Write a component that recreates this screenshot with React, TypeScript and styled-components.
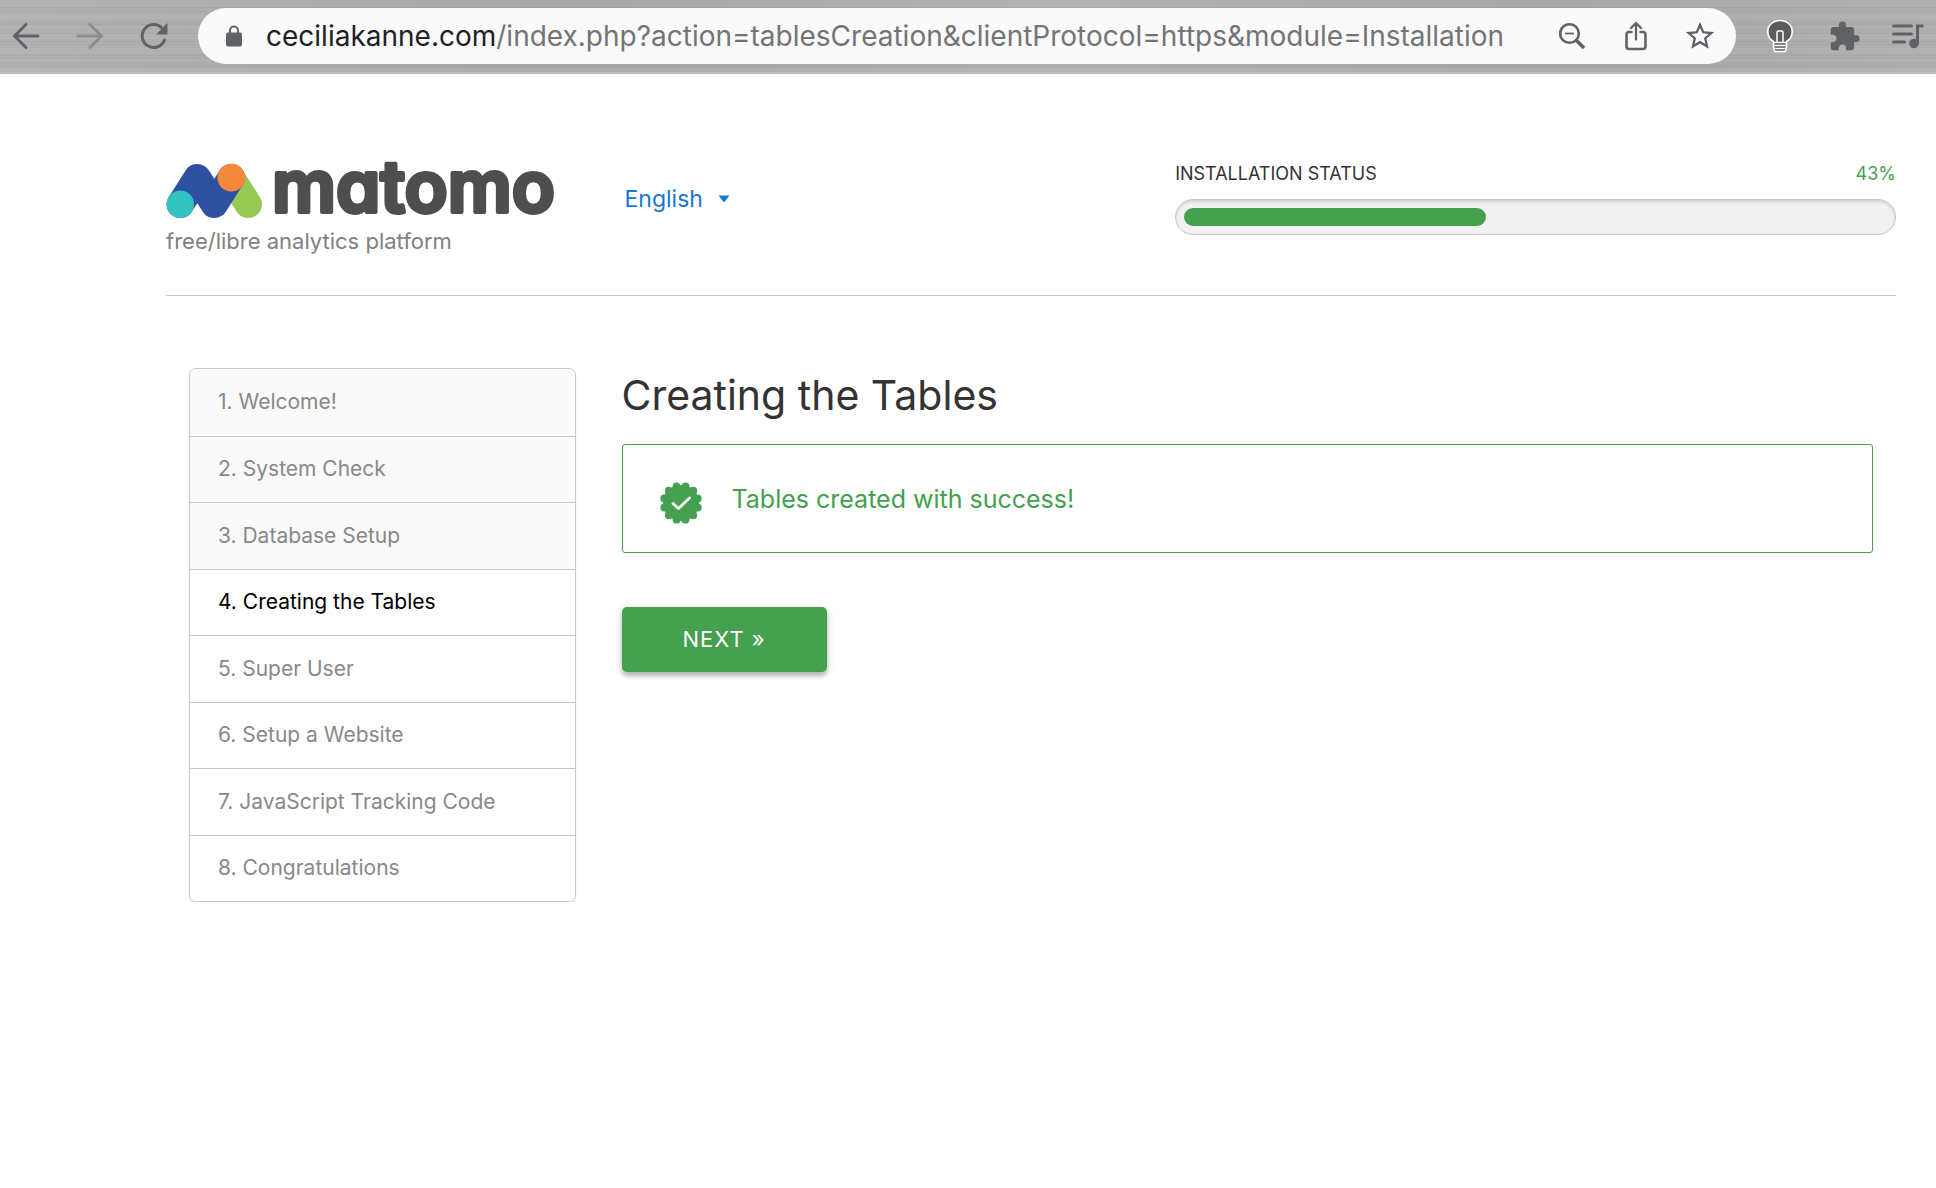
import React from "react";
import styled, { createGlobalStyle } from "styled-components";
import { MdExtension, MdStarBorder } from "react-icons/md";

const color = {
  green: "#45a050",
  blue: "#1976d2",
  line: "#c8c8c8",
  text: "#333333",
  muted: "#888888",
  icon: "#5f6368",
};

const GlobalStyle = createGlobalStyle`
  *, *::before, *::after { box-sizing: border-box; }
  body {
    margin: 0;
    background: #ffffff;
    color: ${color.text};
    font-family: Inter, "Liberation Sans", sans-serif;
  }
  button, select { font-family: inherit; }
`;

/* ---------- browser toolbar ---------- */

const Toolbar = styled.div`
  display: flex;
  align-items: center;
  gap: 18px;
  padding: 8px 2px 8px 0;
  border-bottom: 2px solid #bebebe;
  background:
    linear-gradient(90deg, rgba(255, 255, 255, 0.06), rgba(0, 0, 0, 0.03) 30%, rgba(255, 255, 255, 0.05) 55%, rgba(0, 0, 0, 0.03) 80%, rgba(255, 255, 255, 0.04)),
    repeating-linear-gradient(180deg, rgba(0, 0, 0, 0.03) 0 1px, transparent 1px 4px, rgba(255, 255, 255, 0.06) 4px 6px, transparent 6px 11px),
    repeating-linear-gradient(180deg, rgba(255, 255, 255, 0.05) 0 2px, transparent 2px 7px, rgba(0, 0, 0, 0.04) 7px 8px, transparent 8px 17px),
    #acacac;
`;

const ToolGroup = styled.div`
  display: flex;
  gap: 12px;
`;

const ToolButton = styled.button`
  display: flex;
  align-items: center;
  justify-content: center;
  width: 52px;
  height: 52px;
  padding: 0;
  border: 0;
  border-radius: 50%;
  background: transparent;
  color: ${color.icon};
  cursor: pointer;

  &:disabled {
    opacity: 0.45;
    cursor: default;
  }
`;

const AddressBar = styled.div`
  display: flex;
  flex: 1;
  align-items: center;
  min-width: 0;
  height: 56px;
  padding: 0 10px 0 28px;
  border-radius: 28px;
  background: #fafafa;
  color: ${color.icon};
`;

const Address = styled.div`
  flex: 1;
  min-width: 0;
  margin-left: 24px;
  overflow: hidden;
  font-size: 28px;
  line-height: 36px;
  white-space: nowrap;
  color: #737475;
`;

const Host = styled.span`
  color: #202124;
`;

/* ---------- page ---------- */

const Page = styled.div`
  padding: 84px 40px 0 166px;
`;

const Header = styled.header`
  display: grid;
  grid-template-columns: 3fr 4fr 5fr;
  align-items: start;
  padding: 0 0 39px;
  border-bottom: 1px solid ${color.line};
`;

const Brand = styled.div`
  padding-top: 6px;
`;

const Logo = styled.svg`
  display: block;
  overflow: visible;
`;

const Wordmark = styled.text`
  fill: #4e4e4e;
  stroke: #4e4e4e;
  stroke-width: 4px;
  stroke-linejoin: round;
  font-family: Inter, "Liberation Sans", sans-serif;
  font-size: 71px;
  font-weight: 600;
  font-feature-settings: "cv11";
`;

const Tagline = styled.p`
  margin: 6px 0 0;
  font-size: 22px;
  line-height: 30px;
  color: #808080;
`;

const Language = styled.label`
  display: flex;
  align-items: center;
  gap: 14px;
  padding: 26px 0 0 26px;
  color: ${color.blue};
`;

const LanguageSelect = styled.select`
  appearance: none;
  padding: 0;
  border: 0;
  background: transparent;
  font-size: 23px;
  line-height: 30px;
  color: inherit;
  cursor: pointer;
`;

const StatusLine = styled.div`
  display: flex;
  justify-content: space-between;
  margin-bottom: 9px;
  font-size: 18px;
  line-height: 32px;
`;

const Percent = styled.span`
  color: ${color.green};
`;

const Track = styled.div`
  height: 36px;
  padding: 8px;
  border: 1px solid ${color.line};
  border-radius: 18px;
  background: #f1f1f1;
  box-shadow: inset 0 2px 3px rgba(0, 0, 0, 0.12);
`;

const Fill = styled.div`
  height: 18px;
  border-radius: 9px;
  background: ${color.green};
`;

const Body = styled.div`
  display: grid;
  grid-template-columns: repeat(12, 1fr);
  column-gap: 46px;
  align-items: start;
  padding: 72px 23px 0;
`;

const Steps = styled.ol`
  display: grid;
  grid-column: span 3;
  grid-auto-rows: 1fr;
  min-height: 534px;
  margin: 0;
  padding: 0;
  overflow: hidden;
  list-style: none;
  border: 1px solid ${color.line};
  border-radius: 7px;
  box-shadow: 0 2px 2px rgba(0, 0, 0, 0.1);
`;

type StepState = "done" | "current" | "future";

const Step = styled.li<{ $state: StepState }>`
  display: flex;
  align-items: center;
  padding: 0 28px;
  font-size: 21px;
  line-height: 30px;
  background: ${(p) => (p.$state === "done" ? "#fafafa" : "#ffffff")};
  color: ${(p) => (p.$state === "current" ? "#000000" : color.muted)};

  & + & {
    border-top: 1px solid ${color.line};
  }
`;

const Content = styled.main`
  grid-column: span 9;
`;

const Title = styled.h2`
  margin: 0 0 22px;
  font-size: 41px;
  font-weight: 400;
  line-height: 54px;
`;

const Notice = styled.div`
  display: flex;
  align-items: center;
  gap: 30px;
  height: 109px;
  padding: 0 37px;
  border: 1px solid ${color.green};
  border-radius: 3px;
  font-size: 25px;
  line-height: 36px;
  color: ${color.green};
`;

const NoticeIcon = styled.span`
  display: flex;
  padding-top: 8px;
`;

const NextButton = styled.button`
  margin-top: 54px;
  padding: 0 61px;
  border: 0;
  border-radius: 5px;
  background: ${color.green};
  box-shadow: 0 4px 4px rgba(0, 0, 0, 0.2), 0 2px 8px rgba(0, 0, 0, 0.16);
  font-size: 22px;
  line-height: 65px;
  letter-spacing: 1px;
  color: #ffffff;
  cursor: pointer;
`;

/* ---------- drawings ---------- */

const stroke = {
  fill: "none",
  stroke: "currentColor",
  strokeWidth: 3,
  strokeLinecap: "round" as const,
  strokeLinejoin: "round" as const,
};

const BackIcon = () => (
  <svg width="28" height="28" viewBox="0 0 28 28" {...stroke}>
    <path d="M26 14H3M14 2.5L2.500 14L14 25.500" />
  </svg>
);

const ForwardIcon = () => (
  <svg width="28" height="28" viewBox="0 0 28 28" {...stroke}>
    <path d="M2 14H25M14 2.500L25.500 14L14 25.500" />
  </svg>
);

const ReloadIcon = () => (
  <svg width="30" height="30" viewBox="0 0 30 30">
    <path d="M25.500 19A11.500 11.500 0 1 1 23 7" {...stroke} />
    <path d="M28.500 2V13.500H17Z" fill="currentColor" />
  </svg>
);

const LockIcon = () => (
  <svg width="16" height="22" viewBox="0 0 16 22">
    <path d="M4 9V5.500a4 4 0 0 1 8 0V9" fill="none" stroke="currentColor" strokeWidth="2" />
    <rect y="7.500" width="16" height="14" rx="2" fill="currentColor" />
  </svg>
);

const ZoomOutIcon = () => (
  <svg width="28" height="28" viewBox="0 0 28 28" {...stroke} strokeLinecap="butt">
    <circle cx="11.500" cy="11.500" r="9.300" strokeWidth="2.600" />
    <path d="M7 11.500H16" strokeWidth="1.800" />
    <path d="M18 18L26 26" strokeWidth="3.600" />
  </svg>
);

const ShareIcon = () => (
  <svg width="28" height="30" viewBox="0 0 28 30" {...stroke} strokeWidth={2.6}>
    <path d="M9.500 11H7A2.500 2.500 0 0 0 4.500 13.500V25.500A2.500 2.500 0 0 0 7 28H21A2.500 2.500 0 0 0 23.500 25.500V13.500A2.500 2.500 0 0 0 21 11H18.500" />
    <path d="M14 18.500V2.500M9 7L14 2L19 7" strokeWidth="2.300" />
  </svg>
);

const BulbIcon = () => (
  <svg width="28" height="34" viewBox="0 0 28 34">
    <path
      d="M14 1.500C6.800 1.500 1.800 6.500 1.800 12.500C1.800 17 4 20.500 7.500 22.500V29L9 32.500H19L20.500 29V22.500C24 20.500 26.200 17 26.200 12.500C26.200 6.500 21.200 1.500 14 1.500Z"
      fill="#5c5c5c"
      stroke="#ffffff"
      strokeWidth="1.600"
    />
    <path d="M11 23V13.500Q11 12 12.500 12H15.500Q17 12 17 13.500V23" fill="none" stroke="#ffffff" strokeWidth="1.500" />
    <path d="M7.500 23.500H20.500M7.500 26.500H20.500M8 29.500H20" stroke="#ffffff" strokeWidth="1.500" />
  </svg>
);

const QueueIcon = () => (
  <svg width="34" height="28" viewBox="0 0 34 28" {...stroke}>
    <path d="M2.500 4H20.500M2.500 12H20.500M2.500 20H13.500" />
    <path d="M26.500 22V4H32.500" strokeLinejoin="miter" strokeLinecap="butt" />
    <circle cx="23" cy="21.500" r="4.800" fill="currentColor" stroke="none" />
  </svg>
);

const MatomoLogo = () => (
  <Logo width="400" height="56" viewBox="0 0 400 56" role="img" aria-label="matomo">
    <g fill="none" strokeWidth="27.400" strokeLinecap="round" strokeLinejoin="round">
      <path d="M65.300 13.700L82.300 40.300" stroke="#97c953" />
      <path d="M14.300 40.300L31.300 13.700L48.300 40.300L65.300 13.700" stroke="#2d50a0" />
    </g>
    <circle cx="14.300" cy="40.300" r="13.700" fill="#34c2c3" />
    <circle cx="65.300" cy="13.700" r="13.900" fill="#f6873b" />
    <Wordmark x="106" y="48">matomo</Wordmark>
  </Logo>
);

const VerifiedIcon = () => (
  <svg width="42" height="42" viewBox="0 0 42 42">
    <g fill={color.green}>
      <circle cx="21" cy="21" r="18" />
      {Array.from({ length: 12 }, (_, i) => {
        const angle = ((i * 30 + 15) * Math.PI) / 180;
        return <circle key={i} cx={21 + 17.3 * Math.cos(angle)} cy={21 + 17.3 * Math.sin(angle)} r="3.900" />;
      })}
    </g>
    <path d="M13 21.500L18.500 26.500L29.500 16" {...stroke} stroke="#ffffff" strokeWidth={2.8} />
  </svg>
);

/* ---------- app ---------- */

const steps = [
  "Welcome!",
  "System Check",
  "Database Setup",
  "Creating the Tables",
  "Super User",
  "Setup a Website",
  "JavaScript Tracking Code",
  "Congratulations",
];
const currentStep = 3;
const progress = 43;

const stateOf = (index: number): StepState =>
  index < currentStep ? "done" : index === currentStep ? "current" : "future";

export default function App() {
  return (
    <>
      <GlobalStyle />
      <Toolbar>
        <ToolGroup>
          <ToolButton aria-label="Back"><BackIcon /></ToolButton>
          <ToolButton aria-label="Forward" disabled><ForwardIcon /></ToolButton>
          <ToolButton aria-label="Reload"><ReloadIcon /></ToolButton>
        </ToolGroup>
        <AddressBar>
          <LockIcon />
          <Address role="textbox" aria-label="Address">
            <Host>ceciliakanne.com</Host>
            /index.php?action=tablesCreation&amp;clientProtocol=https&amp;module=Installation
          </Address>
          <ToolGroup>
            <ToolButton aria-label="Zoom"><ZoomOutIcon /></ToolButton>
            <ToolButton aria-label="Share"><ShareIcon /></ToolButton>
            <ToolButton aria-label="Bookmark"><MdStarBorder size={34} /></ToolButton>
          </ToolGroup>
        </AddressBar>
        <ToolGroup>
          <ToolButton aria-label="Light"><BulbIcon /></ToolButton>
          <ToolButton aria-label="Extensions"><MdExtension size={33} /></ToolButton>
          <ToolButton aria-label="Media"><QueueIcon /></ToolButton>
        </ToolGroup>
      </Toolbar>

      <Page>
        <Header>
          <Brand>
            <MatomoLogo />
            <Tagline>free/libre analytics platform</Tagline>
          </Brand>
          <Language>
            <LanguageSelect aria-label="Language" defaultValue="en">
              <option value="en">English</option>
            </LanguageSelect>
            <svg width="12" height="8" viewBox="0 0 12 8">
              <path d="M0.500 0.500H11.500L6 7.500Z" fill="currentColor" />
            </svg>
          </Language>
          <div>
            <StatusLine>
              <span id="status-label">INSTALLATION STATUS</span>
              <Percent>{progress}%</Percent>
            </StatusLine>
            <Track role="progressbar" aria-labelledby="status-label" aria-valuemin={0} aria-valuemax={100} aria-valuenow={progress}>
              <Fill style={{ width: `${progress}%` }} />
            </Track>
          </div>
        </Header>

        <Body>
          <Steps>
            {steps.map((label, index) => (
              <Step key={label} $state={stateOf(index)} aria-current={index === currentStep ? "step" : undefined}>
                {index + 1}. {label}
              </Step>
            ))}
          </Steps>
          <Content>
            <Title>Creating the Tables</Title>
            <Notice role="status">
              <NoticeIcon><VerifiedIcon /></NoticeIcon>
              <span>Tables created with success!</span>
            </Notice>
            <NextButton>NEXT »</NextButton>
          </Content>
        </Body>
      </Page>
    </>
  );
}
